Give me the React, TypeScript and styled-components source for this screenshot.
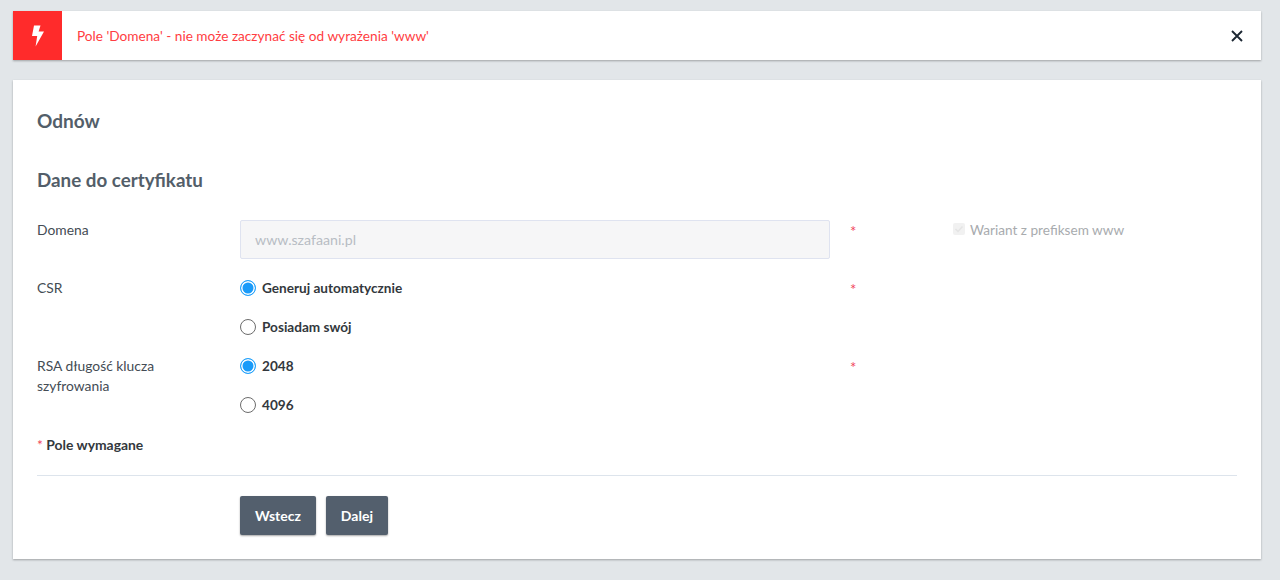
import React from "react";
import styled, { createGlobalStyle } from "styled-components";

const Global = createGlobalStyle`
  html, body { margin: 0; padding: 0; }
  body { background: #e2e6e9; font-family: Lato, "Noto Sans", sans-serif; }
`;

const Page = styled.div`
  width: 1280px;
  height: 580px;
  box-sizing: border-box;
  padding: 11px 19px 0 13px;
  display: flex;
  flex-direction: column;
  gap: 20px;
  overflow: hidden;
`;

const Alert = styled.div`
  height: 49px;
  background: #fff;
  display: flex;
  align-items: center;
  box-shadow: 0 1px 2px rgba(0, 0, 0, 0.3);
`;

const AlertIcon = styled.div`
  width: 49px;
  height: 49px;
  background: #ff2b2b;
  display: flex;
  align-items: center;
  justify-content: center;
`;

const AlertText = styled.div`
  flex: 1;
  padding-left: 15px;
  font-size: 13.65px;
  color: #ff3d42;
`;

const Close = styled.button`
  width: 16px;
  height: 16px;
  margin-right: 16px;
  padding: 0;
  border: 0;
  background: none;
  display: flex;
  color: #1c2733;
`;

const Card = styled.main`
  height: 479px;
  box-sizing: border-box;
  background: #fff;
  box-shadow: 0 1px 2px rgba(0, 0, 0, 0.3);
  padding: 29px 24px 0;
`;

const Title = styled.h1`
  margin: 0;
  height: 23px;
  font-size: 19px;
  line-height: 23px;
  font-weight: 700;
  color: #535e69;
`;

const Subtitle = styled.h2`
  margin: 36px 0 0;
  height: 23px;
  font-size: 18.8px;
  line-height: 23px;
  font-weight: 700;
  color: #535e69;
`;

const Row = styled.div`
  display: grid;
  grid-template-columns: 203px 590px 123px 1fr;
  margin-top: ${(p) => p.$top ?? 0}px;
`;

const Label = styled.div`
  font-size: 13.85px;
  line-height: 20px;
  color: #444c54;
`;

const Field = styled.input`
  width: 100%;
  height: 39px;
  box-sizing: border-box;
  background: #f6f6f7;
  border: 1px solid #dfe3f0;
  border-radius: 2px;
  padding: 0 14px;
  font-family: inherit;
  font-size: 14.2px;
  color: #b8bdc4;
  &:disabled { opacity: 1; -webkit-text-fill-color: #b8bdc4; }
`;

const Star = styled.div`
  padding: 1px 0 0 20px;
  font-size: 15px;
  line-height: 20px;
  color: #f0445a;
`;

const Variant = styled.label`
  display: flex;
  align-items: center;
  gap: 5px;
  height: 19px;
  font-size: 13.6px;
  color: #a8abae;
`;

const Check = styled.span`
  width: 12px;
  height: 12px;
  border-radius: 2px;
  background: #f1f1f1;
  border: 0;
  display: flex;
  color: #e4e4e4;
  margin-top: -2px;
`;

const Radios = styled.div`
  display: flex;
  flex-direction: column;
  gap: 19px;
`;

const Radio = styled.label`
  display: flex;
  align-items: center;
  gap: 6px;
  height: 20px;
  font-size: 13.6px;
  font-weight: 700;
  color: #33383d;
`;

const Dot = styled.span`
  width: 16px;
  height: 16px;
  box-sizing: border-box;
  border-radius: 50%;
  border: ${(p) => (p.$on ? "1.5px solid #25a3fb" : "1.5px solid #6c6c6c")};
  background: ${(p) => (p.$on ? "#1a9bf9" : "#fff")};
  box-shadow: ${(p) => (p.$on ? "inset 0 0 0 1.5px #fff" : "none")};
`;

const Required = styled.div`
  margin-top: 20px;
  height: 20px;
  font-size: 13.9px;
  line-height: 20px;
  font-weight: 700;
  color: #33383d;
`;

const RedStar = styled.span`
  color: #f0445a;
  font-weight: 400;
`;

const Divider = styled.hr`
  margin: 20px 0 0;
  border: 0;
  height: 1px;
  background: #dde4ec;
`;

const Actions = styled.div`
  display: flex;
  gap: 10px;
  padding: 20px 0 0 203px;
`;

const Button = styled.button`
  height: 39px;
  padding: 0 15px;
  border: 0;
  border-radius: 2px;
  background: #535f6d;
  color: #fff;
  font-family: inherit;
  font-size: 14px;
  font-weight: 700;
  box-shadow: 0 1px 2px rgba(0, 0, 0, 0.35);
`;

export default function App() {
  return (
    <>
      <Global />
      <Page>
        <Alert>
          <AlertIcon>
            <svg width="14" height="22" viewBox="0 0 14 22">
              <path d="M3 0.5 L9.5 0.5 L7.6 6.5 L13 6.5 L4.6 21.5 L6.2 11 L1 11 Z" fill="#fff" />
            </svg>
          </AlertIcon>
          <AlertText>Pole 'Domena' - nie może zaczynać się od wyrażenia 'www'</AlertText>
          <Close aria-label="Zamknij">
            <svg width="16" height="16" viewBox="0 0 16 16">
              <path d="M3 3 L13 13 M13 3 L3 13" stroke="currentColor" strokeWidth="1.9" />
            </svg>
          </Close>
        </Alert>
        <Card>
          <Title>Odnów</Title>
          <Subtitle>Dane do certyfikatu</Subtitle>
          <Row $top={29}>
            <Label>Domena</Label>
            <Field value="www.szafaani.pl" disabled readOnly />
            <Star>*</Star>
            <Variant>
              <Check>
                <svg width="12" height="12" viewBox="0 0 12 12">
                  <path d="M2.5 6 L5 8.5 L9.5 3.5" fill="none" stroke="currentColor" strokeWidth="1.5" />
                </svg>
              </Check>
              Wariant z prefiksem www
            </Variant>
          </Row>
          <Row $top={19}>
            <Label>CSR</Label>
            <Radios>
              <Radio><Dot $on />Generuj automatycznie</Radio>
              <Radio><Dot />Posiadam swój</Radio>
            </Radios>
            <Star>*</Star>
          </Row>
          <Row $top={19}>
            <Label>RSA długość klucza<br />szyfrowania</Label>
            <Radios>
              <Radio><Dot $on />2048</Radio>
              <Radio><Dot />4096</Radio>
            </Radios>
            <Star>*</Star>
          </Row>
          <Required><RedStar>*</RedStar> Pole wymagane</Required>
          <Divider />
          <Actions>
            <Button>Wstecz</Button>
            <Button>Dalej</Button>
          </Actions>
        </Card>
      </Page>
    </>
  );
}
